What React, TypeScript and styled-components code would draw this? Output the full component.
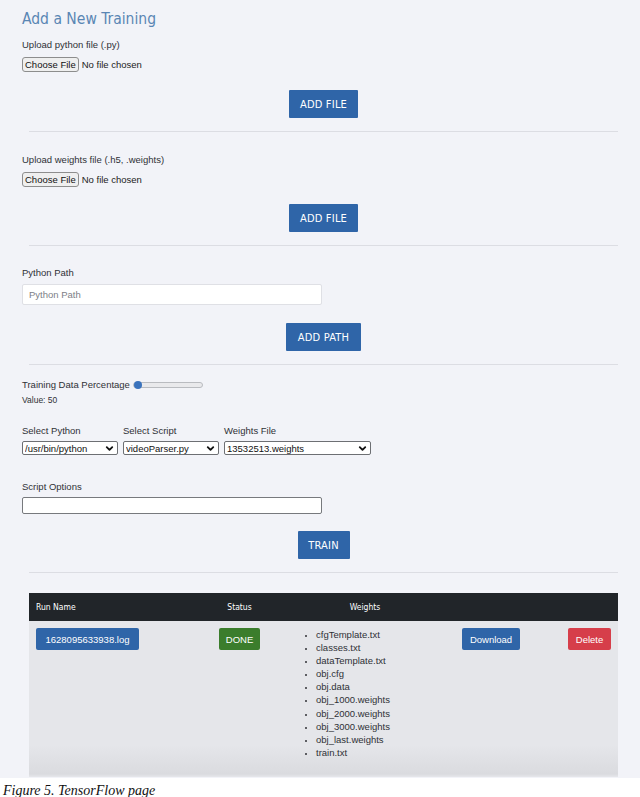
import React from 'react'
import styled, { createGlobalStyle } from 'styled-components'
import { ChevronDown } from 'lucide-react'

const GlobalStyle = createGlobalStyle`
  body {
    margin: 0;
    background: #ffffff;
    font-family: "Liberation Sans", Arial, sans-serif;
  }
`

const Shot = styled.div`
  width: 640px;
  height: 778px;
  overflow: hidden;
  background: #f2f3f8;
`

const Content = styled.div`
  padding: 0 15px 0 22px;
  display: flex;
  flex-direction: column;
  align-items: flex-start;
`

const Title = styled.h2`
  margin: 9px 0 0;
  font-family: "DejaVu Sans Condensed", "Liberation Sans", sans-serif;
  font-weight: normal;
  font-size: 15.5px;
  line-height: 20px;
  color: #5a86b4;
`

const Label = styled.div<{ $top: number }>`
  margin-top: ${p => p.$top}px;
  font-size: 9.5px;
  line-height: 12px;
  color: #2f3136;
`

const FileInput = styled.input`
  margin-top: 6px;
  height: 15px;
  font-family: "Liberation Sans", sans-serif;
  font-size: 9.5px;
  color: #222;

  &::file-selector-button {
    height: 15px;
    padding: 0 2px;
    margin-right: 3px;
    font-family: inherit;
    font-size: 9.5px;
    color: #111;
    background: #efefef;
    border: 1px solid #8d8d8d;
    border-radius: 3px;
  }
`

const ButtonRow = styled.div<{ $top: number }>`
  align-self: stretch;
  display: flex;
  justify-content: center;
  margin-top: ${p => p.$top}px;
`

const PrimaryButton = styled.button<{ $w: number }>`
  width: ${p => p.$w}px;
  height: 28px;
  border: none;
  border-radius: 1px;
  background: #2f65a8;
  color: #ffffff;
  font-family: "DejaVu Sans Condensed", "Liberation Sans", sans-serif;
  font-size: 11px;
  letter-spacing: 0.2px;
`

const Divider = styled.hr<{ $top: number }>`
  align-self: stretch;
  margin: ${p => p.$top}px 7px 0 7px;
  border: none;
  border-top: 1px solid #dcdde3;
`

const TextInput = styled.input<{ $h: number; $border: string; $top: number }>`
  box-sizing: border-box;
  margin-top: ${p => p.$top}px;
  width: 300px;
  height: ${p => p.$h}px;
  padding: 0 6px;
  background: #ffffff;
  border: 1px solid ${p => p.$border};
  border-radius: 2px;
  font-family: "Liberation Sans", sans-serif;
  font-size: 9.5px;
  color: #333;

  &::placeholder {
    color: #7d8087;
  }
`

const SliderRow = styled.div`
  margin-top: 13px;
  display: flex;
  align-items: center;
  gap: 3px;
  font-size: 9.5px;
  line-height: 14px;
  color: #2f3136;
`

const Range = styled.input`
  appearance: none;
  width: 68px;
  height: 4px;
  margin: 0;
  background: #e9e9ec;
  border: 1px solid #b9bbc0;
  border-radius: 3px;

  &::-webkit-slider-thumb {
    appearance: none;
    width: 8px;
    height: 8px;
    border-radius: 50%;
    background: #3b73bd;
  }
`

const SmallText = styled.div`
  margin-top: 3px;
  font-size: 8.5px;
  line-height: 10px;
  color: #2f3136;
`

const SelectGrid = styled.div`
  margin-top: 20px;
  display: flex;
  gap: 5px;
`

const SelectCol = styled.div`
  display: flex;
  flex-direction: column;
  gap: 4px;
`

const SelectLabel = styled.div`
  font-size: 9.5px;
  line-height: 12px;
  color: #2f3136;
`

const SelectWrap = styled.div<{ $w: number }>`
  position: relative;
  width: ${p => p.$w}px;
  height: 14px;
`

const NativeSelect = styled.select`
  appearance: none;
  box-sizing: border-box;
  display: block;
  width: 100%;
  height: 14px;
  margin: 0;
  padding: 0 2px;
  background: #ffffff;
  border: 1px solid #6d6f73;
  border-radius: 2px;
  font-family: "Liberation Sans", sans-serif;
  font-size: 9.5px;
  color: #111;
`

const Chevron = styled(ChevronDown)`
  position: absolute;
  right: 3px;
  top: 2px;
  pointer-events: none;
`

const Table = styled.div`
  align-self: stretch;
  margin: 20px 7px 0 7px;
`

const Row = styled.div<{ $head?: boolean }>`
  display: grid;
  grid-template-columns: 150px 121px 130px 122px 66px;
  align-items: ${p => (p.$head ? 'center' : 'start')};
  height: ${p => (p.$head ? '28px' : '156px')};
  padding-top: ${p => (p.$head ? '0' : '7px')};
  box-sizing: border-box;
  background: ${p =>
    p.$head ? '#212529' : 'linear-gradient(#e5e6ea 0, #e5e6ea 124px, #dadbdf 153px, #e6e7eb 156px)'};
  color: ${p => (p.$head ? '#ffffff' : '#2f3136')};
`

const HeadCell = styled.div<{ $align: string }>`
  padding-left: ${p => (p.$align === 'left' ? '7px' : '0')};
  text-align: ${p => p.$align};
  font-family: "DejaVu Sans Condensed", "Liberation Sans", sans-serif;
  font-size: 8.5px;
`

const Cell = styled.div<{ $justify: string }>`
  display: flex;
  justify-content: ${p => p.$justify};
  padding: 0 7px;
`

const TagButton = styled.button<{ $bg: string; $w: number }>`
  width: ${p => p.$w}px;
  height: 22px;
  border: none;
  border-radius: 2px;
  background: ${p => p.$bg};
  color: #ffffff;
  font-family: "Liberation Sans", sans-serif;
  font-size: 9.5px;
  padding: 0;
`

const FileList = styled.ul`
  margin: 0;
  padding: 0 0 0 16px;
  font-size: 9.5px;
  line-height: 13.1px;
  color: #2f3136;

  li::marker {
    font-size: 8px;
  }
`

const Caption = styled.div`
  padding: 5px 0 0 3px;
  font-family: "Liberation Serif", "Times New Roman", serif;
  font-style: italic;
  font-size: 14px;
  color: #111;
`

const weights = [
  'cfgTemplate.txt',
  'classes.txt',
  'dataTemplate.txt',
  'obj.cfg',
  'obj.data',
  'obj_1000.weights',
  'obj_2000.weights',
  'obj_3000.weights',
  'obj_last.weights',
  'train.txt',
]

function Select({ width, value }: { width: number; value: string }) {
  return (
    <SelectWrap $w={width}>
      <NativeSelect defaultValue={value}>
        <option>{value}</option>
      </NativeSelect>
      <Chevron size={11} strokeWidth={4} color="#111" />
    </SelectWrap>
  )
}

export default function App() {
  return (
    <>
      <GlobalStyle />
      <Shot>
        <Content>
          <Title>Add a New Training</Title>

          <Label $top={10}>Upload python file (.py)</Label>
          <FileInput type="file" />
          <ButtonRow $top={18}>
            <PrimaryButton $w={69}>ADD FILE</PrimaryButton>
          </ButtonRow>
          <Divider $top={13} />

          <Label $top={22}>Upload weights file (.h5, .weights)</Label>
          <FileInput type="file" />
          <ButtonRow $top={17}>
            <PrimaryButton $w={69}>ADD FILE</PrimaryButton>
          </ButtonRow>
          <Divider $top={13} />

          <Label $top={21}>Python Path</Label>
          <TextInput $top={5} $h={21} $border="#dfe0e5" placeholder="Python Path" />
          <ButtonRow $top={18}>
            <PrimaryButton $w={75}>ADD PATH</PrimaryButton>
          </ButtonRow>
          <Divider $top={13} />

          <SliderRow>
            Training Data Percentage
            <Range type="range" min={50} max={100} defaultValue={50} />
          </SliderRow>
          <SmallText>Value: 50</SmallText>

          <SelectGrid>
            <SelectCol>
              <SelectLabel>Select Python</SelectLabel>
              <Select width={96} value="/usr/bin/python" />
            </SelectCol>
            <SelectCol>
              <SelectLabel>Select Script</SelectLabel>
              <Select width={96} value="videoParser.py" />
            </SelectCol>
            <SelectCol>
              <SelectLabel>Weights File</SelectLabel>
              <Select width={147} value="13532513.weights" />
            </SelectCol>
          </SelectGrid>

          <Label $top={26}>Script Options</Label>
          <TextInput $top={4} $h={17} $border="#77797d" />
          <ButtonRow $top={17}>
            <PrimaryButton $w={52}>TRAIN</PrimaryButton>
          </ButtonRow>
          <Divider $top={13} />

          <Table>
            <Row $head>
              <HeadCell $align="left">Run Name</HeadCell>
              <HeadCell $align="center">Status</HeadCell>
              <HeadCell $align="center">Weights</HeadCell>
              <HeadCell $align="center" />
              <HeadCell $align="center" />
            </Row>
            <Row>
              <Cell $justify="flex-start">
                <TagButton $bg="#2f65a8" $w={103}>1628095633938.log</TagButton>
              </Cell>
              <Cell $justify="center">
                <TagButton $bg="#3b7d2c" $w={41}>DONE</TagButton>
              </Cell>
              <div>
                <FileList>
                  {weights.map(w => (
                    <li key={w}>{w}</li>
                  ))}
                </FileList>
              </div>
              <Cell $justify="center">
                <TagButton $bg="#2f65a8" $w={58}>Download</TagButton>
              </Cell>
              <Cell $justify="flex-end">
                <TagButton $bg="#d63e4a" $w={43}>Delete</TagButton>
              </Cell>
            </Row>
          </Table>
        </Content>
      </Shot>
      <Caption>Figure 5. TensorFlow page</Caption>
    </>
  )
}
